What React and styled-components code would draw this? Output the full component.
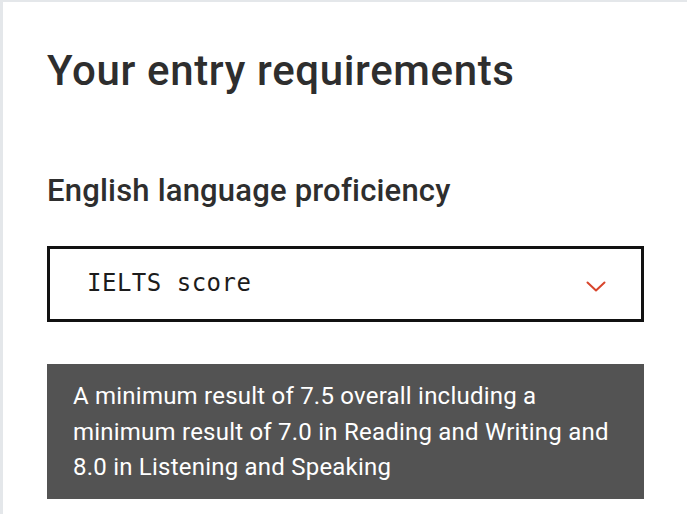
import styled, { createGlobalStyle } from "styled-components";

const GlobalStyle = createGlobalStyle`
  html, body {
    margin: 0;
    padding: 0;
    background: #ffffff;
  }
  body {
    font-family: "Roboto", "Liberation Sans", sans-serif;
    color: #2e2e2e;
  }
`;

function Chevron() {
  return (
    <svg width="20" height="11" viewBox="0 0 20 11" fill="none">
      <path
        d="M1.5 1.5 L10 9.5 L18.5 1.5"
        stroke="#d8452c"
        strokeWidth="2"
        strokeLinecap="round"
        strokeLinejoin="round"
      />
    </svg>
  );
}

function App() {
  return (
    <>
      <GlobalStyle />
      <Frame>
        <Title>Your entry requirements</Title>
        <Subtitle>English language proficiency</Subtitle>
        <Select>
          <SelectLabel>IELTS score</SelectLabel>
          <ChevronWrap>
            <Chevron />
          </ChevronWrap>
        </Select>
        <Notice>
          A minimum result of 7.5 overall including a
          <br />
          minimum result of 7.0 in Reading and Writing and
          <br />
          8.0 in Listening and Speaking
        </Notice>
      </Frame>
    </>
  );
}

export default App;

const Frame = styled.div`
  box-sizing: border-box;
  width: 687px;
  height: 514px;
  border-top: 2px solid #e4e7ea;
  border-left: 3px solid #e4e7ea;
  padding: 0 43px 0 44px;
  display: flex;
  flex-direction: column;
  overflow: hidden;
`;

const Title = styled.h1`
  margin: 44px 0 0;
  font-size: 42px;
  line-height: 50px;
  font-weight: 500;
  letter-spacing: 0.65px;
  color: #2e2e2e;
  white-space: nowrap;
`;

const Subtitle = styled.h2`
  margin: 76px 0 0;
  font-size: 31px;
  line-height: 38px;
  font-weight: 500;
  letter-spacing: 0.2px;
  color: #2e2e2e;
  white-space: nowrap;
`;

const Select = styled.div`
  box-sizing: border-box;
  margin-top: 36px;
  height: 76px;
  border: 3px solid #111111;
  display: flex;
  align-items: center;
  justify-content: space-between;
  padding: 0 35px 0 37px;
`;

const SelectLabel = styled.span`
  font-family: "DejaVu Sans Mono", "Liberation Mono", monospace;
  font-size: 24px;
  letter-spacing: 0.5px;
  color: #1c1c1c;
  margin-top: -3px;
`;

const ChevronWrap = styled.span`
  display: flex;
  margin-top: 5px;
`;

const Notice = styled.div`
  box-sizing: border-box;
  margin-top: 42px;
  background: #535353;
  color: #ffffff;
  font-size: 24px;
  line-height: 35.5px;
  letter-spacing: 0.22px;
  padding: 15px 26px 13.5px;
  white-space: nowrap;
`;
